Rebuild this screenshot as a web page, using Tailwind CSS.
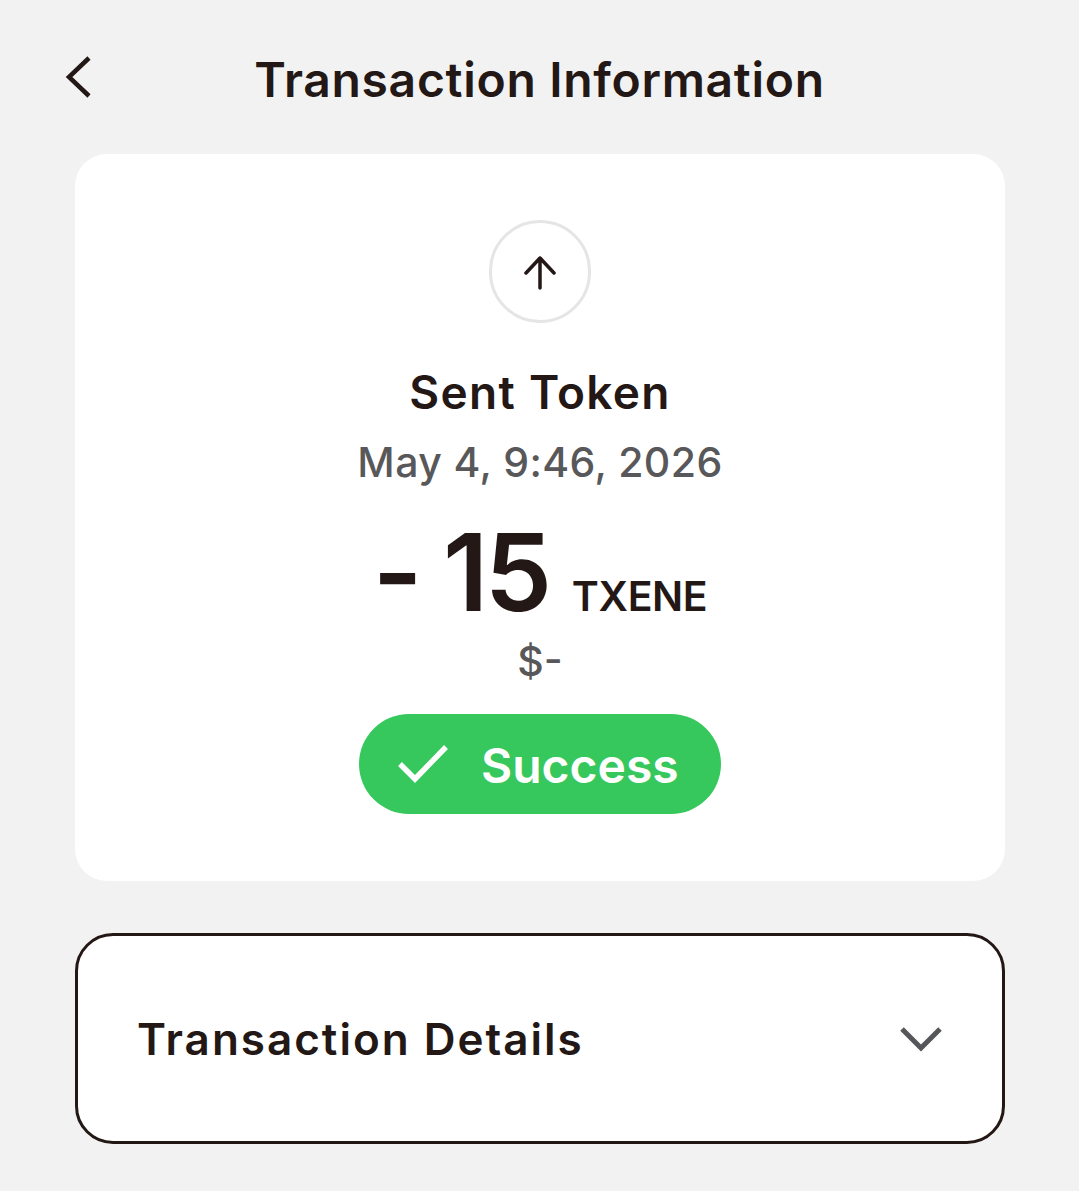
<!DOCTYPE html>
<html lang="en">
<head>
  <meta charset="UTF-8">
  <meta name="viewport" content="width=device-width, initial-scale=1.0">
  <title>Transaction Information</title>
  <script src="https://cdn.jsdelivr.net/npm/@tailwindcss/browser@4"></script>
</head>
<body class="bg-[#f2f2f2] font-['Inter',sans-serif] text-[#231815]">
  <div class="w-[1079px] h-[1191px] overflow-hidden">
    <!-- Header -->
    <header class="relative h-[154px] flex justify-center pt-[51px]">
      <svg class="absolute left-[63px] top-[54px] w-[30px] h-[46px]" viewBox="0 0 30 46" fill="none" stroke="#231815" stroke-width="4.5">
        <path d="M26 4 L6 23 L26 42" />
      </svg>
      <h1 class="text-[48px] leading-[58px] font-semibold tracking-[0.7px]">Transaction Information</h1>
    </header>

    <!-- Summary card -->
    <section class="ml-[75px] w-[930px] h-[727px] bg-white rounded-[32px] flex flex-col items-center pt-[66px]">
      <div class="w-[102px] h-[103px] rounded-full border-[3px] border-[#e5e5e5] flex items-center justify-center">
        <svg class="w-[34px] h-[34px] mt-[3px]" viewBox="0 0 34 34" fill="none" stroke="#231815" stroke-width="3.5" stroke-linecap="round" stroke-linejoin="round">
          <path d="M17 32 V2 M3 17 L17 2 L31 17" />
        </svg>
      </div>
      <h2 class="mt-[39px] text-[46px] leading-[60px] font-semibold tracking-[1.3px]">Sent Token</h2>
      <p class="mt-[12px] text-[41px] leading-[56px] font-medium tracking-[0.4px] text-[#58585a]">May 4, 9:46, 2026</p>
      <div class="mt-[18px] flex items-baseline h-[128px]">
        <span class="text-[107px] leading-[128px] font-semibold tracking-[-3.3px]">- 15</span>
        <span class="ml-[23px] text-[41px] leading-[56px] font-semibold tracking-[-0.4px]">TXENE</span>
      </div>
      <p class="mt-[0px] text-[41px] leading-[50px] font-medium text-[#58585a]">$-</p>
      <div class="mt-[28px] w-[362px] h-[100px] rounded-full bg-[#36c85c] flex items-center pl-[38px] text-white">
        <svg class="w-[52px] h-[40px]" viewBox="0 0 52 40" fill="none" stroke="#ffffff" stroke-width="5.5">
          <path d="M3 20 L18 35 L49 3" />
        </svg>
        <span class="ml-[32px] text-[48px] leading-[60px] font-semibold relative top-[2px]">Success</span>
      </div>
    </section>

    <!-- Details row -->
    <section class="mt-[52px] ml-[75px] w-[930px] h-[211px] bg-white border-[3px] border-[#231815] rounded-[38px] flex items-center justify-between pl-[59px] pr-[60px]">
      <span class="text-[44px] leading-[60px] font-semibold tracking-[2px]">Transaction Details</span>
      <svg class="w-[42px] h-[26px]" viewBox="0 0 42 26" fill="none" stroke="#54565a" stroke-width="5">
        <path d="M2 3 L21 22 L40 3" />
      </svg>
    </section>
  </div>
</body>
</html>
